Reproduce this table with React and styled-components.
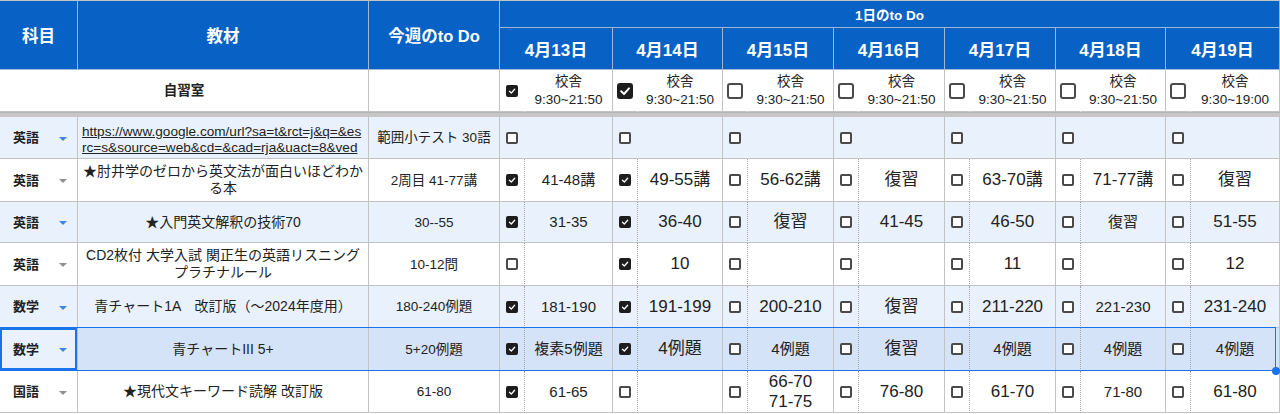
import React from 'react';
import styled, { createGlobalStyle } from 'styled-components';

const COLS =
  '78px 291px 131px 25px 88px 25px 85px 25px 86px 25px 86px 25px 86px 25px 85px 25px 89px';
const GRID = '#c3c3c3';
const BAND = '#e9f2fc';
const SELECT = '#d5e3f8';
const BLUE = '#1a73e8';
const FONT = '"Liberation Sans", "Noto Sans CJK JP", Arial, sans-serif';

const GlobalStyle = createGlobalStyle`
  html, body {
    margin: 0;
    padding: 0;
    background: #fff;
    overflow: hidden;
  }
  body {
    font-family: ${FONT};
    color: #222;
  }
`;

const Sheet = styled.div`
  width: 1280px;
  display: flex;
  flex-direction: column;
  border-top: 1px solid ${GRID};
`;

const HeadGrid = styled.div`
  display: grid;
  grid-template-columns: ${COLS};
  grid-template-rows: 27px 42px;
`;

const HeadCell = styled.div`
  grid-column: span ${(p) => p.$cols || 1};
  grid-row: span ${(p) => p.$rows || 1};
  background: #0861c5;
  color: #fff;
  font-weight: bold;
  font-size: ${(p) => p.$size || 16.5}px;
  display: flex;
  align-items: center;
  justify-content: center;
  border-right: 1px solid #a3b6d3;
  border-bottom: 1px solid #a3b6d3;
  white-space: nowrap;
`;

const Row = styled.div`
  position: relative;
  display: grid;
  grid-template-columns: ${COLS};
  height: ${(p) => p.$h}px;
  background: ${(p) => p.$bg || '#fff'};

  ${(p) =>
    p.$selected &&
    `
    &::after {
      content: '';
      position: absolute;
      top: -1px;
      left: 0;
      right: 4px;
      bottom: 0;
      border: 1px solid ${BLUE};
      pointer-events: none;
    }
  `}
`;

const Handle = styled.span`
  position: absolute;
  right: 0;
  bottom: -4px;
  width: 8px;
  height: 8px;
  border-radius: 50%;
  background: ${BLUE};
  z-index: 2;
`;

const Cell = styled.div`
  grid-column: span ${(p) => p.$span || 1};
  display: flex;
  align-items: center;
  justify-content: center;
  text-align: center;
  font-size: ${(p) => p.$size || 14}px;
  font-weight: ${(p) => (p.$bold ? 'bold' : 'normal')};
  line-height: ${(p) => p.$lh || 17}px;
  background: ${(p) => p.$bg || 'transparent'};
  border-right: 1px ${(p) => (p.$dotted ? 'dotted #a5a5a5' : p.$open ? 'solid transparent' : `solid ${GRID}`)};
  border-bottom: 1px solid ${GRID};
  overflow: hidden;
  white-space: nowrap;
  box-sizing: border-box;
`;

const SubjectCell = styled(Cell)`
  justify-content: space-between;
  padding: 0 10px 0 13px;
  font-weight: bold;
  font-size: 13px;
  ${(p) => p.$active && `box-shadow: inset 0 0 0 2px ${BLUE};`}
`;

const Arrow = styled.span`
  width: 0;
  height: 0;
  border-left: 4px solid transparent;
  border-right: 4px solid transparent;
  border-top: 4px solid ${(p) => (p.$blue ? '#3d85e0' : '#8f8f8f')};
  margin-top: 2px;
`;

const UrlCell = styled(Cell)`
  flex-direction: column;
  align-items: flex-start;
  justify-content: flex-start;
  padding: 7px 4px 0;
  font-size: 13.6px;
  line-height: 16px;
  text-decoration: underline;
  text-align: left;
`;

const Lines = styled.span`
  display: flex;
  flex-direction: column;
  align-items: center;
`;

const Box = styled.span`
  width: ${(p) => p.$size}px;
  height: ${(p) => p.$size}px;
  box-sizing: border-box;
  border-radius: ${(p) => (p.$size > 12 ? 3 : 2)}px;
  border: 2px solid ${(p) => (p.$checked ? '#1d1d1d' : '#4a4a4a')};
  background: ${(p) => (p.$checked ? '#1d1d1d' : '#fff')};
  display: inline-flex;
  align-items: center;
  justify-content: center;
`;

const Check = ({ checked, size = 12 }) => (
  <Box $checked={checked} $size={size}>
    {checked && (
      <svg width={size - 2} height={size - 2} viewBox="0 0 12 12">
        <path
          d="M2.2 6.3 L5 9 L10 3.4"
          fill="none"
          stroke="#fff"
          strokeWidth={size > 12 ? 2 : 1.9}
          strokeLinecap="round"
          strokeLinejoin="round"
        />
      </svg>
    )}
  </Box>
);

const Band = styled.div`
  height: 5px;
  background: #c6c6c6;
  border-top: 1px solid #b5b5b5;
  box-sizing: border-box;
`;

const DATES = ['4月13日', '4月14日', '4月15日', '4月16日', '4月17日', '4月18日', '4月19日'];

const STUDY = [
  [1, 12, '9:30~21:50'],
  [1, 16, '9:30~21:50'],
  [0, 16, '9:30~21:50'],
  [0, 16, '9:30~21:50'],
  [0, 16, '9:30~21:50'],
  [0, 16, '9:30~21:50'],
  [0, 16, '9:30~19:00'],
];

const S = 15;
const L = 17;

const ROWS = [
  {
    subj: '英語',
    blue: true,
    h: 42,
    url: [
      'https://www.google.com/url?sa=t&rct=j&q=&es',
      'rc=s&source=web&cd=&cad=rja&uact=8&ved',
      '=2ahUKEwjvxmiq8T-AhVxFYBHc1A0sQFn',
    ],
    week: '範囲小テスト 30語',
    plain: true,
    days: [[0], [0], [0], [0], [0], [0], [0]],
  },
  {
    subj: '英語',
    h: 43,
    book: ['★肘井学のゼロから英文法が面白いほどわか', 'る本'],
    week: '2周目 41-77講',
    days: [
      [1, '41-48講', S],
      [1, '49-55講', L],
      [0, '56-62講', L],
      [0, '復習', L],
      [0, '63-70講', L],
      [0, '71-77講', L],
      [0, '復習', L],
    ],
  },
  {
    subj: '英語',
    blue: true,
    h: 41,
    book: ['★入門英文解釈の技術70'],
    week: '30--55',
    days: [
      [1, '31-35', S],
      [1, '36-40', L],
      [0, '復習', L],
      [0, '41-45', L],
      [0, '46-50', L],
      [0, '復習', S],
      [0, '51-55', L],
    ],
  },
  {
    subj: '英語',
    h: 43,
    book: ['CD2枚付 大学入試 関正生の英語リスニング', 'プラチナルール'],
    week: '10-12問',
    days: [
      [0, ''],
      [1, '10', L],
      [0, ''],
      [0, ''],
      [0, '11', L],
      [0, ''],
      [0, '12', L],
    ],
  },
  {
    subj: '数学',
    blue: true,
    h: 42,
    book: ['青チャート1A　改訂版（～2024年度用）'],
    week: '180-240例題',
    days: [
      [1, '181-190', S],
      [1, '191-199', L],
      [0, '200-210', L],
      [0, '復習', L],
      [0, '211-220', L],
      [0, '221-230', S],
      [0, '231-240', L],
    ],
  },
  {
    subj: '数学',
    blue: true,
    selected: true,
    h: 43,
    book: ['青チャートIII 5+'],
    week: '5+20例題',
    days: [
      [1, '複素5例題', S],
      [1, '4例題', L],
      [0, '4例題', S],
      [0, '復習', L],
      [0, '4例題', S],
      [0, '4例題', S],
      [0, '4例題', S],
    ],
  },
  {
    subj: '国語',
    h: 42,
    book: ['★現代文キーワード読解 改訂版'],
    week: '61-80',
    days: [
      [1, '61-65', S],
      [0, ''],
      [0, '66-70\n71-75', L],
      [0, '76-80', L],
      [0, '61-70', L],
      [0, '71-80', S],
      [0, '61-80', L],
    ],
  },
];

const DataRow = ({ row }) => {
  const tint = row.selected ? SELECT : undefined;
  return (
    <Row $h={row.h} $bg={row.blue ? BAND : '#fff'} $selected={row.selected}>
      <SubjectCell $active={row.selected}>
        {row.subj}
        <Arrow $blue={row.blue} />
      </SubjectCell>
      {row.url ? (
        <UrlCell $bg={tint}>
          {row.url.map((l) => (
            <span key={l}>{l}</span>
          ))}
        </UrlCell>
      ) : (
        <Cell $bg={tint}>
          <Lines>
            {row.book.map((l) => (
              <span key={l}>{l}</span>
            ))}
          </Lines>
        </Cell>
      )}
      <Cell $bg={tint} $size={13.5}>
        {row.week}
      </Cell>
      {row.days.map(([checked, text, size], i) => (
        <React.Fragment key={i}>
          <Cell $bg={tint} $dotted={!row.plain} $open={row.plain}>
            <Check checked={!!checked} />
          </Cell>
          <Cell $bg={tint} $size={size} $lh={20}>
            {text && (
              <Lines>
                {text.split('\n').map((l) => (
                  <span key={l}>{l}</span>
                ))}
              </Lines>
            )}
          </Cell>
        </React.Fragment>
      ))}
      {row.selected && <Handle />}
    </Row>
  );
};

export default function App() {
  return (
    <>
      <GlobalStyle />
      <Sheet>
        <HeadGrid>
          <HeadCell $rows={2}>科目</HeadCell>
          <HeadCell $rows={2}>教材</HeadCell>
          <HeadCell $rows={2}>今週のto Do</HeadCell>
          <HeadCell $cols={14} $size={13.5}>
            1日のto Do
          </HeadCell>
          {DATES.map((d) => (
            <HeadCell key={d} $cols={2} $size={17}>
              {d}
            </HeadCell>
          ))}
        </HeadGrid>

        <Row $h={42}>
          <Cell $span={2} $bold $size={13.5}>
            自習室
          </Cell>
          <Cell />
          {STUDY.map(([checked, size, time], i) => (
            <React.Fragment key={i}>
              <Cell $open>
                <Check checked={!!checked} size={size} />
              </Cell>
              <Cell $size={13.5} $lh={17.5}>
                <Lines>
                  <span>校舎</span>
                  <span>{time}</span>
                </Lines>
              </Cell>
            </React.Fragment>
          ))}
        </Row>
        <Band />

        {ROWS.map((r, i) => (
          <DataRow key={i} row={r} />
        ))}
      </Sheet>
    </>
  );
}
